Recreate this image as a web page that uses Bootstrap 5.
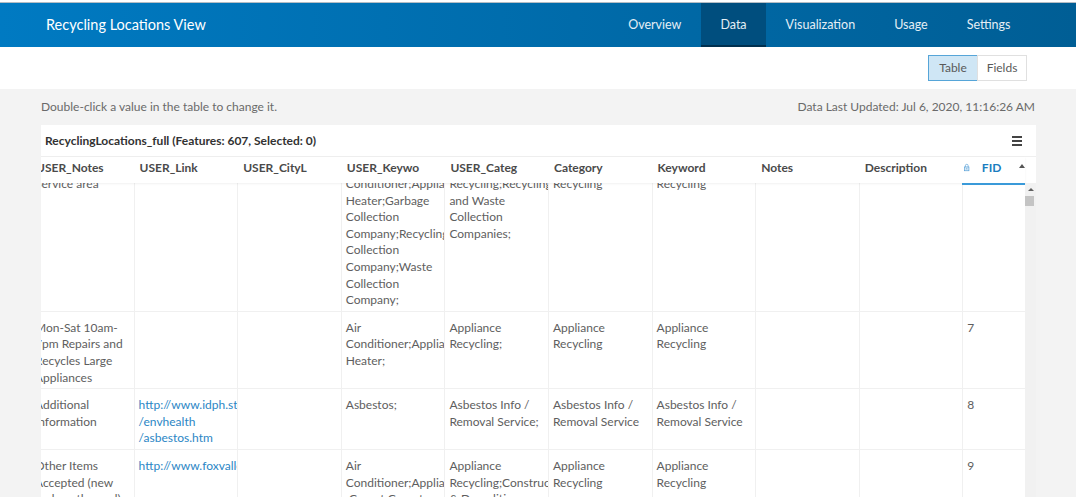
<!DOCTYPE html>
<html>
<head>
    <title>Recycling Locations View</title>
    <link href="https://cdn.jsdelivr.net/npm/bootstrap@5.3.0/dist/css/bootstrap.min.css" rel="stylesheet">
    <style>
        html, body { height: 100%; overflow: hidden; }
        body { font-family: Lato, "Open Sans", sans-serif; font-size: 12px; color: #4c4c4c; background: #f3f3f3; }

        .top-strip { height: 3px; background: #fff; border-bottom: 1px solid #b5bdc4; }
        .app-bar { height: 44px; background: linear-gradient(90deg, #007ac2, #005e95); padding: 0 46px; }
        .app-title { color: #fff; font-size: 14.5px; }
        .app-tab { color: #e4eef5; font-size: 12.5px; padding: 0 19.5px; line-height: 44px; height: 44px; text-decoration: none; }
        .app-tab.on { background: #004e7e; box-shadow: inset 0 -2px 0 #00304f; }

        .view-bar { height: 42px; background: #fff; padding-right: 49px; }
        .view-btn { font-size: 12px; color: #595959; background: #fff; border: 1px solid #e0e0e0; border-radius: 0; padding: 0; width: 50px; height: 26px; }
        .view-btn.on { background: #cfe6f5; border-color: #56a5d8; }

        .info-row { height: 36px; padding: 0 41px; color: #6a6a6a; font-size: 12px; }

        .data-card { margin: 0 40px 0 41px; background: #fff; height: 372px; overflow: hidden; }
        .data-title { height: 32px; padding: 0 14px 0 4px; font-weight: 700; font-size: 12px; color: #323232; border-bottom: 1px solid #efefef; }
        .menu-bars { width: 10px; height: 10px; border-top: 2px solid #444; border-bottom: 2px solid #444; position: relative; }
        .menu-bars::after { content: ""; position: absolute; left: 0; right: 0; top: 2px; height: 2px; background: #444; }

        .head-row { height: 26px; margin-left: -11px; width: 995px; box-shadow: 0 1px 2px rgba(0,0,0,.06); position: relative; z-index: 1; background: #fff; }
        .head-cell { width: 103.6px; flex: none; padding-left: 6px; font-weight: 700; font-size: 12px; color: #4a4a4a; line-height: 21px; }
        .head-cell.fid { width: 63px; padding-left: 2px; color: #1a7dc0; box-shadow: 0 2px 0 #3a9ad9; height: 26px; }
        .sort-up { width: 0; height: 0; border: 3px solid transparent; border-top: 0; border-bottom: 4px solid #555; margin-left: 18px; margin-top: 7px; }

        .grid-wrap { height: 314px; overflow: hidden; }
        .grid-pane { width: 984px; height: 314px; overflow: hidden; flex: none; }
        .data-grid { table-layout: fixed; width: 995px; margin: -16px 0 0 -11px; border-collapse: collapse; }
        .data-grid td { width: 103.6px; padding: 8px 5px 2px 4px; font-size: 12px; line-height: 16.6px; color: #5e5e5e; border: 1px solid #f0f0f0; vertical-align: top; overflow: hidden; background: #fff; box-shadow: none; }
        .data-grid td:last-child { width: 63px; }
        .data-grid a { color: #2b86c5; text-decoration: none; white-space: nowrap; display: block; }

        .scroll-rail { width: 11px; background: #f1f1f1; position: relative; }
        .scroll-up { position: absolute; left: 3px; top: 5px; width: 0; height: 0; border: 3px solid transparent; border-top: 0; border-bottom: 3px solid #606060; }
        .scroll-thumb { position: absolute; left: 0; top: 13px; width: 9px; height: 10px; background: #c4c4c4; }
    </style>
</head>
<body>
    <div class="top-strip"></div>

    <div class="app-bar d-flex align-items-center justify-content-between">
        <span class="app-title">Recycling Locations View</span>
        <nav class="d-flex">
            <a class="app-tab" href="#">Overview</a>
            <a class="app-tab on" href="#">Data</a>
            <a class="app-tab" href="#">Visualization</a>
            <a class="app-tab" href="#">Usage</a>
            <a class="app-tab" href="#">Settings</a>
        </nav>
    </div>

    <div class="view-bar d-flex align-items-center justify-content-end">
        <div class="btn-group">
            <button class="btn view-btn on">Table</button>
            <button class="btn view-btn">Fields</button>
        </div>
    </div>

    <div class="info-row d-flex align-items-center justify-content-between">
        <span>Double-click a value in the table to change it.</span>
        <span>Data Last Updated: Jul 6, 2020, 11:16:26 AM</span>
    </div>

    <div class="data-card">
        <div class="data-title d-flex align-items-center justify-content-between">
            <span>RecyclingLocations_full (Features: 607, Selected: 0)</span>
            <span class="menu-bars"></span>
        </div>

        <div class="head-row d-flex">
            <div class="head-cell">USER_Notes</div>
            <div class="head-cell">USER_Link</div>
            <div class="head-cell">USER_CityL</div>
            <div class="head-cell">USER_Keywo</div>
            <div class="head-cell">USER_Categ</div>
            <div class="head-cell">Category</div>
            <div class="head-cell">Keyword</div>
            <div class="head-cell">Notes</div>
            <div class="head-cell">Description</div>
            <div class="head-cell fid d-flex align-items-start">
                <svg width="10" height="13" viewBox="0 0 10 13" class="me-2 mt-1" fill="none" stroke="#3a8fd0" stroke-width="1">
                    <rect x="1" y="5.5" width="8" height="7" fill="#d6e9f6"/>
                    <path d="M2.5 5.5V3.2a2.5 2.5 0 0 1 5 0v2.3"/>
                    <path d="M5 7.5v2.5"/>
                </svg>
                <span class="ms-1">FID</span>
                <span class="sort-up"></span>
            </div>
        </div>

        <div class="grid-wrap d-flex">
            <div class="grid-pane">
                <table class="data-grid">
                    <tr>
                        <td>Service area</td>
                        <td></td>
                        <td></td>
                        <td>Conditioner;Appliance Heater;Garbage Collection Company;Recycling Collection Company;Waste Collection Company;</td>
                        <td>Recycling;Recycling and Waste Collection Companies;</td>
                        <td>Recycling</td>
                        <td>Recycling</td>
                        <td></td>
                        <td></td>
                        <td></td>
                    </tr>
                    <tr>
                        <td>Mon-Sat 10am-7pm Repairs and Recycles Large Appliances</td>
                        <td></td>
                        <td></td>
                        <td>Air Conditioner;Appliance Heater;</td>
                        <td>Appliance Recycling;</td>
                        <td>Appliance Recycling</td>
                        <td>Appliance Recycling</td>
                        <td></td>
                        <td></td>
                        <td>7</td>
                    </tr>
                    <tr>
                        <td>Additional Information</td>
                        <td><a href="#">http://www.idph.state.il.us</a><a href="#">/envhealth</a><a href="#">/asbestos.htm</a></td>
                        <td></td>
                        <td>Asbestos;</td>
                        <td>Asbestos Info / Removal Service;</td>
                        <td>Asbestos Info / Removal Service</td>
                        <td>Asbestos Info / Removal Service</td>
                        <td></td>
                        <td></td>
                        <td>8</td>
                    </tr>
                    <tr>
                        <td>Other Items Accepted (new and gently used):</td>
                        <td><a href="#">http://www.foxvalleyhabitat.org</a></td>
                        <td></td>
                        <td>Air Conditioner;Appliance ;Carpet;Carpet</td>
                        <td>Appliance Recycling;Construction &amp; Demolition</td>
                        <td>Appliance Recycling</td>
                        <td>Appliance Recycling</td>
                        <td></td>
                        <td></td>
                        <td>9</td>
                    </tr>
                </table>
            </div>
            <div class="scroll-rail flex-grow-1">
                <span class="scroll-up"></span>
                <span class="scroll-thumb"></span>
            </div>
        </div>
    </div>

    <script src="https://cdn.jsdelivr.net/npm/bootstrap@5.3.0/dist/js/bootstrap.bundle.min.js"></script>
</body>
</html>
